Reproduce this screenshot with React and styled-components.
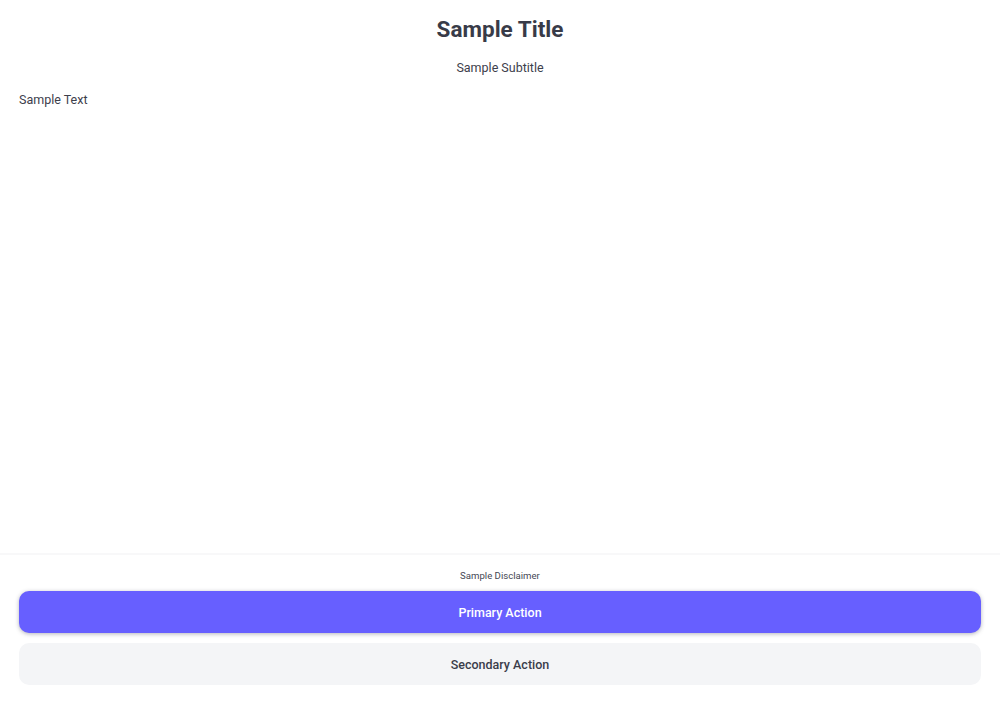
import styled, { createGlobalStyle } from 'styled-components'

const GlobalStyle = createGlobalStyle`
	html, body {
		margin: 0;
		padding: 0;
		background: #ffffff;
		font-family: Roboto, 'Liberation Sans', sans-serif;
		color: #3d404c;
	}
	* {
		box-sizing: border-box;
	}
`

const Screen = styled.div`
	min-height: 100vh;
	display: flex;
	flex-flow: column;
`

const Content = styled.main`
	flex: 1;
	padding: 15px 19px 0;
`

const Title = styled.h1`
	margin: 0;
	text-align: center;
	font-size: 22.5px;
	line-height: 28px;
	font-weight: 700;
	color: #383b48;
`

const Subtitle = styled.p`
	margin: 16px 0 0;
	text-align: center;
	font-size: 12.5px;
	line-height: 18px;
`

const Body = styled.p`
	margin: 14px 0 0;
	font-size: 12.5px;
	line-height: 18px;
`

const Footer = styled.footer`
	display: flex;
	flex-flow: column;
	gap: 10px;
	padding: 14px 19px 18px;
	border-top: 2px solid #f8f8f9;
`

const Disclaimer = styled.p`
	margin: 0 0 -2px;
	text-align: center;
	font-size: 9.6px;
	line-height: 14px;
	color: #454854;
`

const Button = styled.button`
	height: 42px;
	width: 100%;
	border: none;
	border-radius: 10px;
	font-family: inherit;
	font-size: 12.5px;
	font-weight: 500;
	cursor: pointer;
	background: ${(props) => (props.primary ? '#675fff' : '#f4f5f7')};
	color: ${(props) => (props.primary ? '#ffffff' : '#3a3d4a')};
	box-shadow: ${(props) =>
		props.primary ? '0 1px 4px rgba(40, 40, 60, 0.35)' : 'none'};
`

const App = () => {
	return (
		<Screen>
			<GlobalStyle />
			<Content>
				<Title>Sample Title</Title>
				<Subtitle>Sample Subtitle</Subtitle>
				<Body>Sample Text</Body>
			</Content>
			<Footer>
				<Disclaimer>Sample Disclaimer</Disclaimer>
				<Button primary>Primary Action</Button>
				<Button>Secondary Action</Button>
			</Footer>
		</Screen>
	)
}

export default App
